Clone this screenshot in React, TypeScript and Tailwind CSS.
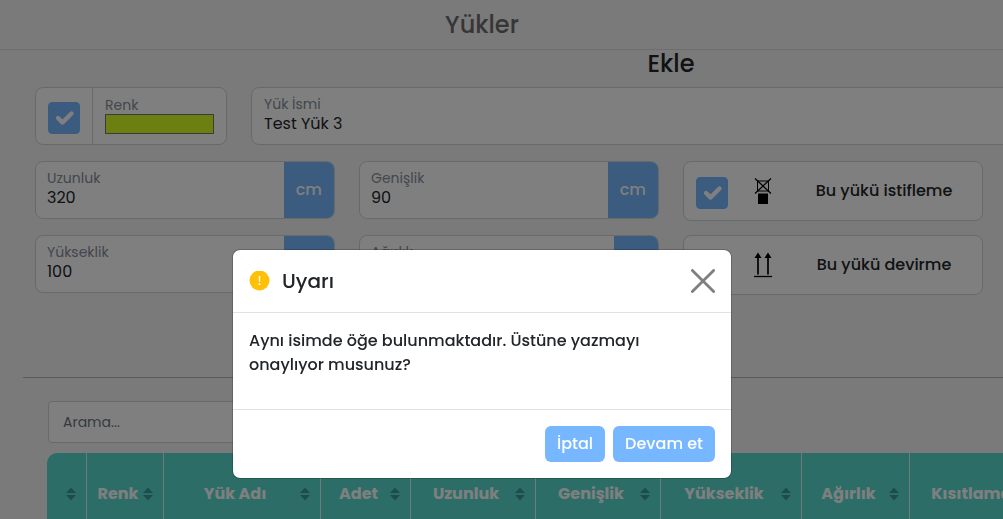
import React, { useState } from 'react';

const columns = [
  { label: '', width: 'w-[40px]' },
  { label: 'Renk', width: 'w-[77px]' },
  { label: 'Yük Adı', width: 'w-[157px]' },
  { label: 'Adet', width: 'w-[90px]' },
  { label: 'Uzunluk', width: 'w-[125px]' },
  { label: 'Genişlik', width: 'w-[125px]' },
  { label: 'Yükseklik', width: 'w-[141px]' },
  { label: 'Ağırlık', width: 'w-[108px]' },
  { label: 'Kısıtlamalar', width: 'w-[160px]' },
];

function SortIcon() {
  return (
    <svg width="10" height="14" viewBox="0 0 10 14" className="shrink-0 fill-[#3c9a92]" aria-hidden="true">
      <path d="M5 0.5L10 6H0z" />
      <path d="M5 13.5L0 8h10z" />
    </svg>
  );
}

function NoStackIcon() {
  return (
    <svg width="18" height="26" viewBox="0 0 18 26" fill="none" stroke="#000" aria-hidden="true">
      <rect x="3.5" y="3" width="11" height="10" strokeWidth="1" />
      <path d="M1 0.5L17 15.5M17 0.5L1 15.5" strokeWidth="1.2" />
      <rect x="4" y="15.5" width="10" height="10.5" fill="#000" stroke="none" />
    </svg>
  );
}

function ThisSideUpIcon() {
  return (
    <svg width="18" height="26" viewBox="0 0 18 26" aria-hidden="true">
      <path d="M4 4v18.5M14 4v18.5" stroke="#000" strokeWidth="1.7" />
      <path d="M4 0.5L7.5 6H0.5zM14 0.5L17.5 6H10.5z" />
      <path d="M0 24.5h18" stroke="#000" strokeWidth="1.3" />
    </svg>
  );
}

function Checkbox({ label }: { label: string }) {
  const [checked, setChecked] = useState(true);

  return (
    <span className="mt-1 grid shrink-0">
      <input
        type="checkbox"
        aria-label={label}
        checked={checked}
        onChange={() => setChecked(!checked)}
        className="peer col-start-1 row-start-1 size-8 appearance-none rounded border border-[#dee2e6] bg-white checked:border-[#77b7ff] checked:bg-[#77b7ff]"
      />
      <svg
        viewBox="0 0 32 32"
        className="pointer-events-none invisible col-start-1 row-start-1 size-8 peer-checked:visible"
        fill="none"
        stroke="#fff"
        strokeWidth="4.4"
        strokeLinecap="round"
        strokeLinejoin="round"
      >
        <path d="M10 16l4.5 4.5L23.5 11.5" />
      </svg>
    </span>
  );
}

function MeasureField({ id, label, value, unit }: { id: string; label: string; value: string; unit: string }) {
  return (
    <div className="col-span-3 flex h-[58px] overflow-hidden rounded-lg border border-[#ced4da] bg-white">
      <div className="flex min-w-0 flex-1 flex-col px-[11px] pt-2">
        <label htmlFor={id} className="text-sm leading-4 text-[#868e9b]">{label}</label>
        <input id={id} defaultValue={value} className="w-full text-base leading-6 text-[#212529] outline-none" />
      </div>
      <span className="flex items-center bg-[#77b7ff] px-3 text-base font-medium text-white">{unit}</span>
    </div>
  );
}

function OptionCard({ label, icon }: { label: string; icon: React.ReactNode }) {
  return (
    <div className="col-span-3 flex h-[60px] items-center rounded-lg border border-[#ced4da] bg-white px-3">
      <Checkbox label={label} />
      <span className="flex w-[70px] shrink-0 justify-center">{icon}</span>
      <span className="flex-1 text-center text-base font-medium">{label}</span>
    </div>
  );
}

function WarningModal({ onClose }: { onClose: () => void }) {
  return (
    <div className="fixed inset-0 z-50 flex items-start justify-center bg-black/50 pt-[249px] pr-[39px]">
      <div role="dialog" aria-labelledby="modal-title" className="w-full max-w-[500px] rounded-lg border border-black/20 bg-white bg-clip-padding">
        <div className="flex items-center justify-between border-b border-[#dee2e6] p-4">
          <div className="flex items-center gap-3">
            <svg width="21" height="21" viewBox="0 0 21 21" aria-hidden="true">
              <circle cx="10.5" cy="9.5" r="10" fill="#ffc107" />
              <path d="M9.7 5h1.6l-0.3 5.8h-1z" fill="#fff" />
              <circle cx="10.5" cy="13.2" r="1" fill="#fff" />
            </svg>
            <h5 id="modal-title" className="text-xl leading-[30px] font-medium">Uyarı</h5>
          </div>
          <button type="button" aria-label="Kapat" onClick={onClose}>
            <svg width="24" height="24" viewBox="0 0 24 24" fill="none" stroke="#7f7f7f" strokeWidth="2.8" strokeLinecap="round">
              <path d="M1.4 1.4l21.2 21.2M22.6 1.4L1.4 22.6" />
            </svg>
          </button>
        </div>
        <div className="p-4">
          <p className="mb-4 text-base leading-6 font-medium">
            Aynı isimde öğe bulunmaktadır. Üstüne yazmayı onaylıyor musunuz?
          </p>
        </div>
        <div className="flex justify-end gap-2 border-t border-[#dee2e6] p-4">
          <button type="button" onClick={onClose} className="h-9 rounded-md bg-[#77b7ff] px-3 text-base font-medium text-white">İptal</button>
          <button type="button" onClick={onClose} className="h-9 rounded-md bg-[#77b7ff] px-3 text-base font-medium text-white">Devam et</button>
        </div>
      </div>
    </div>
  );
}

export default function App() {
  const [isModalOpen, setIsModalOpen] = useState(true);

  return (
    <div className="h-screen overflow-hidden bg-[#f5f5f5] font-[Poppins,Inter,sans-serif] text-[#212529]">
      <header className="flex h-[50px] items-center justify-center border-b border-[#dcdcdc] pr-[39px]">
        <h1 className="text-2xl font-medium text-[#6c6c6c]">Yükler</h1>
      </header>

      <main className="ml-[23px] min-w-[1296px]">
        <h2 className="pb-[9px] text-center text-2xl leading-7 font-medium">Ekle</h2>

        <form className="grid auto-rows-[74px] grid-cols-12 items-start gap-x-6 px-3">
          <div className="col-span-2 flex h-[58px] rounded-lg border border-[#ced4da] bg-white">
            <div className="flex items-center border-r border-[#ced4da] px-3">
              <Checkbox label="Renk seç" />
            </div>
            <div className="flex flex-1 flex-col px-3 pt-2">
              <label htmlFor="color" className="text-sm leading-[18px] text-[#868e9b]">Renk</label>
              <input
                id="color"
                type="color"
                defaultValue="#d9ff22"
                className="h-5 w-full appearance-none [&::-webkit-color-swatch]:border-[#767676] [&::-webkit-color-swatch-wrapper]:p-0"
              />
            </div>
          </div>
          <div className="col-span-10 flex h-[58px] flex-col rounded-lg border border-[#ced4da] bg-white px-3 pt-2">
            <label htmlFor="name" className="text-sm leading-4 text-[#868e9b]">Yük İsmi</label>
            <input id="name" defaultValue="Test Yük 3" className="w-full text-base leading-6 outline-none" />
          </div>

          <MeasureField id="length" label="Uzunluk" value="320" unit="cm" />
          <MeasureField id="width" label="Genişlik" value="90" unit="cm" />
          <OptionCard label="Bu yükü istifleme" icon={<NoStackIcon />} />

          <div className="col-span-9 col-start-1 grid grid-cols-9 items-start gap-x-6">
            <MeasureField id="height" label="Yükseklik" value="100" unit="cm" />
            <MeasureField id="weight" label="Ağırlık" value="10" unit="kg" />
            <OptionCard label="Bu yükü devirme" icon={<ThisSideUpIcon />} />
          </div>
        </form>

        <hr className="mt-[68px] border-[#b4b4b6]" />

        <section className="px-6 pt-[23px]">
          <input
            type="search"
            aria-label="Arama"
            placeholder="Arama..."
            className="ml-px block h-[42px] w-[300px] rounded border border-[#ced4da] bg-white px-[14px] text-sm placeholder:text-[#6c757d]"
          />
          <div className="mt-[10px] overflow-hidden rounded-t-[10px]">
            <table className="w-full table-fixed border-separate border-spacing-0 bg-[#5adbd0] text-white">
              <thead>
                <tr>
                  {columns.map((col, i) => (
                    <th key={i} className={`${col.width} h-[82px] border-r border-white/80 p-0`}>
                      <button type="button" aria-label={col.label || 'Sırala'} className="flex w-full items-center pr-[10px] pl-1.5">
                        <span className="flex-1 text-center text-base font-bold">{col.label}</span>
                        <SortIcon />
                      </button>
                    </th>
                  ))}
                  <th className="p-0" />
                </tr>
              </thead>
            </table>
          </div>
        </section>
      </main>

      {isModalOpen && <WarningModal onClose={() => setIsModalOpen(false)} />}
    </div>
  );
}
